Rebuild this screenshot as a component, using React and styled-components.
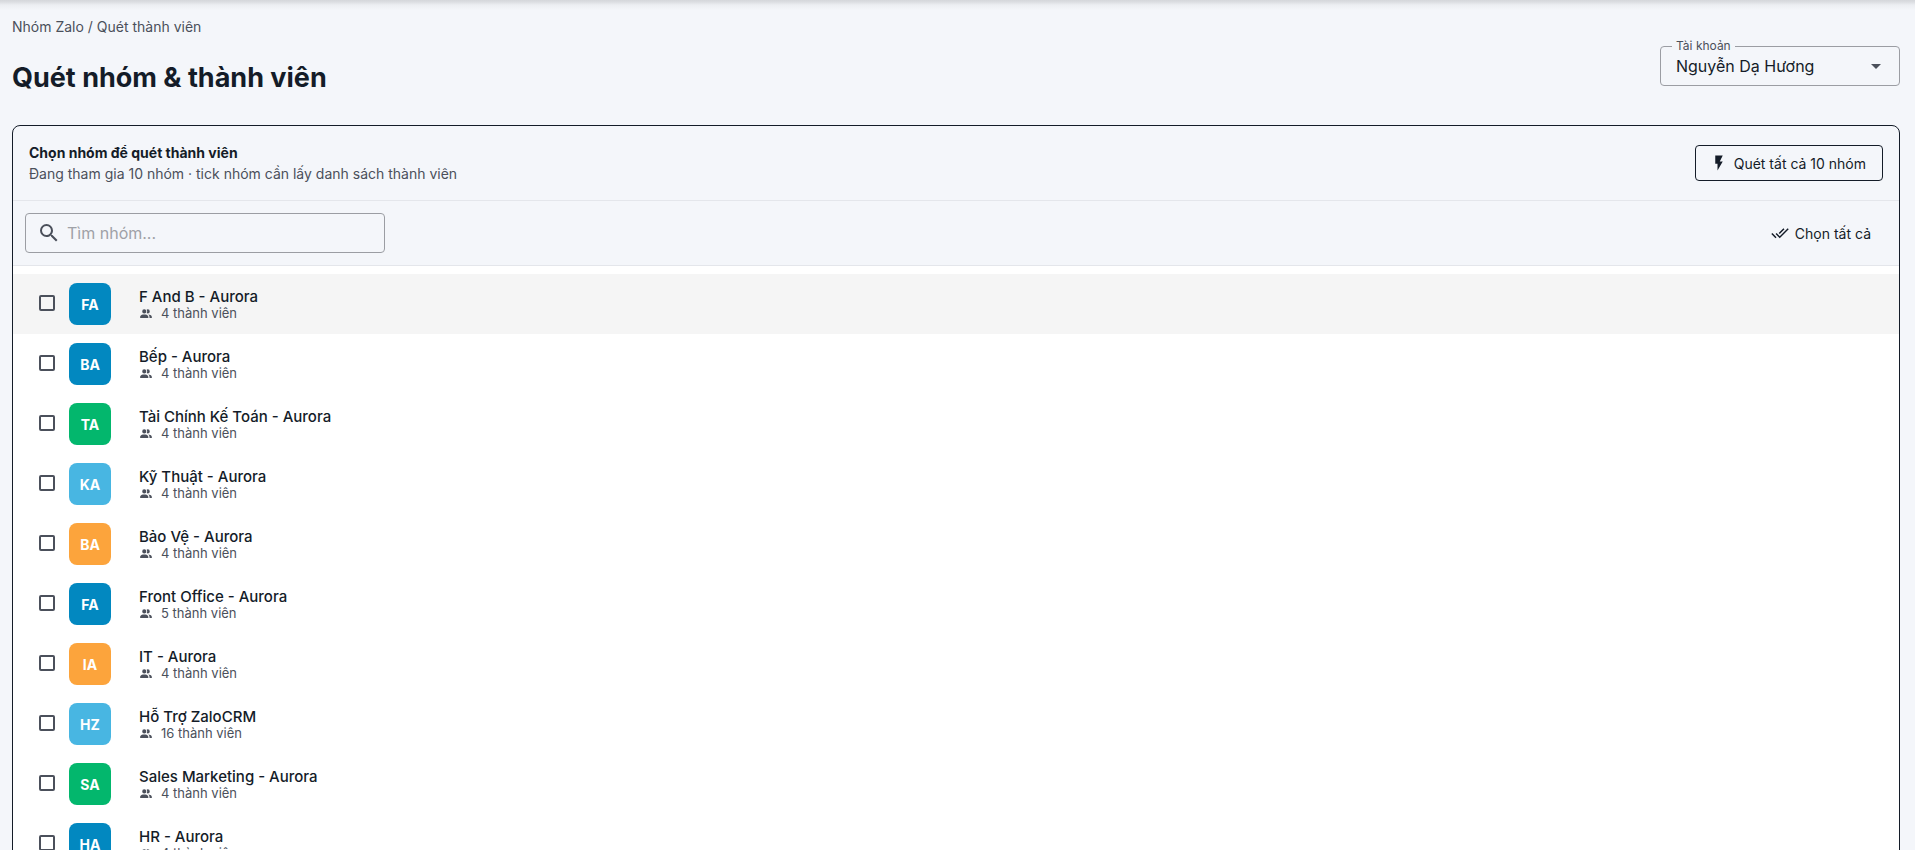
import React, { useState } from "react";
import styled, { createGlobalStyle } from "styled-components";

const ink = "#141c28";
const muted = "#4b505b";
const outline = "#9b9da3";
const surface = "#f4f6fa";
const divider = "#e4e6eb";

const GlobalStyle = createGlobalStyle`
  *, *::before, *::after { box-sizing: border-box; }
  html { scrollbar-width: none; background: ${surface}; }
  body { margin: 0; color: ${ink}; }
  body, button, input, select { font-family: Inter, "Noto Sans", sans-serif; }
`;

const Page = styled.div`
  background: ${surface};
  padding: 0 15px 12px 12px;
`;

const TopShadow = styled.div`
  height: 10px;
  margin: 0 -15px 0 -12px;
  background: linear-gradient(to bottom, #d5d7db 0, #dcdee2 2px, #eceef2 5px, ${surface} 10px);
`;

const PageHeader = styled.header`
  display: flex;
  justify-content: space-between;
  align-items: flex-end;
  padding: 7px 0 27px;
`;

const Breadcrumb = styled.nav`
  font-size: 14px;
  line-height: 20px;
  color: ${muted};
`;

const PageTitle = styled.h1`
  margin: 20px 0 0;
  font-size: 27px;
  line-height: 41px;
  font-weight: 700;
`;

const AccountField = styled.div`
  position: relative;
  width: 240px;
  margin-bottom: 12px;
`;

const AccountLabel = styled.label`
  position: absolute;
  top: -9px;
  left: 12px;
  padding: 0 4px;
  background: ${surface};
  font-size: 12px;
  line-height: 18px;
  color: ${muted};
`;

const AccountSelect = styled.select`
  appearance: none;
  display: block;
  width: 100%;
  height: 40px;
  padding: 0 40px 0 15px;
  border: 1px solid ${outline};
  border-radius: 4px;
  background: transparent;
  font-size: 16px;
  color: ${ink};
`;

const SelectArrow = styled.span`
  position: absolute;
  top: 8px;
  right: 12px;
  display: flex;
  color: ${muted};
  pointer-events: none;
`;

const Panel = styled.section`
  border: 1px solid ${ink};
  border-radius: 8px;
  overflow: hidden;
`;

const PanelHeader = styled.div`
  display: flex;
  justify-content: space-between;
  align-items: center;
  padding: 16px;
  border-bottom: 1px solid ${divider};
`;

const PanelTitle = styled.h2`
  margin: 0;
  font-size: 14px;
  line-height: 21px;
  font-weight: 700;
`;

const PanelHint = styled.p`
  margin: 0;
  font-size: 14px;
  line-height: 21px;
  color: ${muted};
`;

const ActionButton = styled.button`
  display: flex;
  align-items: center;
  gap: 6px;
  height: 36px;
  padding: 0 16px 0 14px;
  border: ${(p) => (p.$outlined ? `1px solid ${ink}` : "0")};
  border-radius: 4px;
  background: transparent;
  font-size: 14px;
  color: ${ink};
  cursor: pointer;
`;

const Toolbar = styled.div`
  display: flex;
  justify-content: space-between;
  align-items: center;
  padding: 12px;
  border-bottom: 1px solid ${divider};
`;

const SearchBox = styled.label`
  display: flex;
  align-items: center;
  gap: 6px;
  width: 360px;
  height: 40px;
  padding: 0 11px;
  border: 1px solid ${outline};
  border-radius: 4px;
  color: ${muted};
`;

const SearchInput = styled.input`
  flex: 1;
  min-width: 0;
  padding: 0;
  border: 0;
  outline: 0;
  background: transparent;
  font-size: 16px;
  color: ${ink};
  &::placeholder { color: #9fa1a7; opacity: 1; }
`;

const GroupList = styled.ul`
  margin: 0;
  padding: 8px 0;
  list-style: none;
  background: #ffffff;
`;

const GroupRow = styled.label`
  display: flex;
  align-items: center;
  height: 60px;
  padding: 0 26px;
  background: ${(p) => (p.$active ? "#f5f5f5" : "transparent")};
  cursor: pointer;
`;

const Tick = styled.input`
  appearance: none;
  width: 16px;
  height: 16px;
  margin: 0 14px 2px 0;
  border: 2px solid ${muted};
  border-radius: 2px;
  &:checked { background: ${muted}; }
`;

const Avatar = styled.span`
  display: flex;
  align-items: center;
  justify-content: center;
  width: 42px;
  height: 42px;
  margin-right: 28px;
  border-radius: 8px;
  background: ${(p) => p.$color};
  font-size: 14px;
  font-weight: 700;
  color: #ffffff;
`;

const GroupText = styled.span`
  display: flex;
  flex-direction: column;
  padding-top: 2px;
`;

const GroupName = styled.span`
  font-size: 15px;
  line-height: 17px;
  font-weight: 500;
`;

const GroupMeta = styled.span`
  display: flex;
  align-items: center;
  gap: 8px;
  font-size: 13px;
  line-height: 17px;
  color: ${muted};
`;

const Glyph = styled.svg`
  display: block;
  flex: none;
  fill: currentColor;
`;

const paths = {
  magnify:
    "M9.5,3A6.5,6.5 0 0,1 16,9.5C16,11.11 15.41,12.59 14.44,13.73L14.71,14H15.5L20.5,19L19,20.5L14,15.5V14.71L13.73,14.44C12.59,15.41 11.11,16 9.5,16A6.5,6.5 0 0,1 3,9.5A6.5,6.5 0 0,1 9.5,3M9.5,5C7,5 5,7 5,9.5C5,12 7,14 9.5,14C12,14 14,12 14,9.5C14,7 12,5 9.5,5Z",
  arrow: "M7,10L12,15L17,10H7Z",
  flash: "M7,2V13H10V22L17,10H13L17,2H7Z",
  checkAll:
    "M0.41,13.41L6,19L7.41,17.58L1.83,12M22.24,5.58L11.66,16.17L7.5,12L6.07,13.41L11.66,19L23.66,7M18,7L16.59,5.58L10.24,11.93L11.66,13.34L18,7Z",
  people:
    "M16 17V19H2V17S2 13 9 13 16 17 16 17M12.5 7.5A3.5 3.5 0 1 0 9 11A3.5 3.5 0 0 0 12.5 7.5M15.94 13A5.32 5.32 0 0 1 18 17V19H22V17S22 13.37 15.94 13M15 4A3.39 3.39 0 0 0 13.07 4.59A5 5 0 0 1 13.07 10.41A3.39 3.39 0 0 0 15 11A3.5 3.5 0 0 0 15 4Z",
};

function Icon({ name, size }) {
  return (
    <Glyph width={size} height={size} viewBox="0 0 24 24" aria-hidden="true">
      <path d={paths[name]} />
    </Glyph>
  );
}

const blue = "#0288c0";
const green = "#03b76d";
const sky = "#48b6e2";
const orange = "#fca43c";

const groups = [
  { name: "F And B - Aurora", initials: "FA", members: 4, color: blue },
  { name: "Bếp - Aurora", initials: "BA", members: 4, color: blue },
  { name: "Tài Chính Kế Toán - Aurora", initials: "TA", members: 4, color: green },
  { name: "Kỹ Thuật - Aurora", initials: "KA", members: 4, color: sky },
  { name: "Bảo Vệ - Aurora", initials: "BA", members: 4, color: orange },
  { name: "Front Office - Aurora", initials: "FA", members: 5, color: blue },
  { name: "IT - Aurora", initials: "IA", members: 4, color: orange },
  { name: "Hỗ Trợ ZaloCRM", initials: "HZ", members: 16, color: sky },
  { name: "Sales Marketing - Aurora", initials: "SA", members: 4, color: green },
  { name: "HR - Aurora", initials: "HA", members: 4, color: blue },
];

export default function App() {
  const [query, setQuery] = useState("");
  const [selected, setSelected] = useState([]);

  const toggle = (name) =>
    setSelected((now) => (now.includes(name) ? now.filter((n) => n !== name) : [...now, name]));
  const visible = groups.filter((g) => g.name.toLowerCase().includes(query.toLowerCase()));

  return (
    <Page>
      <GlobalStyle />
      <TopShadow />
      <PageHeader>
        <div>
          <Breadcrumb>Nhóm Zalo / Quét thành viên</Breadcrumb>
          <PageTitle>Quét nhóm &amp; thành viên</PageTitle>
        </div>
        <AccountField>
          <AccountSelect id="account" defaultValue="huong">
            <option value="huong">Nguyễn Dạ Hương</option>
          </AccountSelect>
          <AccountLabel htmlFor="account">Tài khoản</AccountLabel>
          <SelectArrow>
            <Icon name="arrow" size={24} />
          </SelectArrow>
        </AccountField>
      </PageHeader>
      <Panel>
        <PanelHeader>
          <div>
            <PanelTitle>Chọn nhóm để quét thành viên</PanelTitle>
            <PanelHint>Đang tham gia 10 nhóm · tick nhóm cần lấy danh sách thành viên</PanelHint>
          </div>
          <ActionButton type="button" $outlined>
            <Icon name="flash" size={18} />
            Quét tất cả 10 nhóm
          </ActionButton>
        </PanelHeader>
        <Toolbar>
          <SearchBox>
            <Icon name="magnify" size={24} />
            <SearchInput
              type="text"
              aria-label="Tìm nhóm"
              placeholder="Tìm nhóm..."
              value={query}
              onChange={(e) => setQuery(e.target.value)}
            />
          </SearchBox>
          <ActionButton type="button" onClick={() => setSelected(groups.map((g) => g.name))}>
            <Icon name="checkAll" size={18} />
            Chọn tất cả
          </ActionButton>
        </Toolbar>
        <GroupList>
          {visible.map((g, i) => (
            <li key={g.name}>
              <GroupRow $active={i === 0}>
                <Tick type="checkbox" checked={selected.includes(g.name)} onChange={() => toggle(g.name)} />
                <Avatar $color={g.color}>{g.initials}</Avatar>
                <GroupText>
                  <GroupName>{g.name}</GroupName>
                  <GroupMeta>
                    <Icon name="people" size={14} />
                    {g.members} thành viên
                  </GroupMeta>
                </GroupText>
              </GroupRow>
            </li>
          ))}
        </GroupList>
      </Panel>
    </Page>
  );
}
